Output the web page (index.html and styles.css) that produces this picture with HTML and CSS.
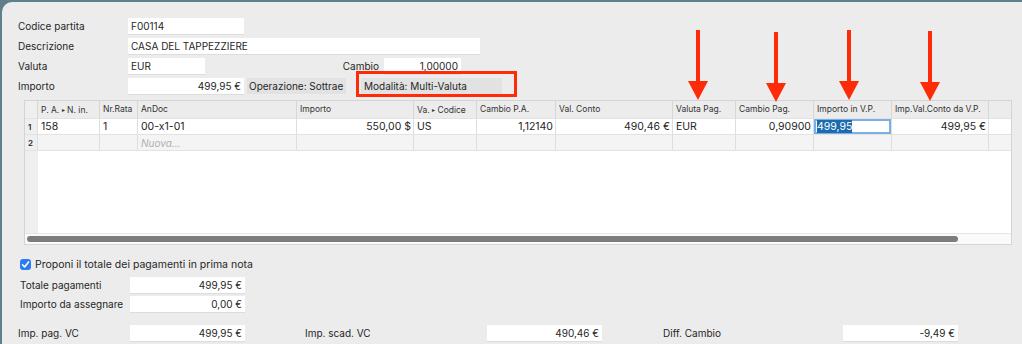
FILE: index.html
```html
<!DOCTYPE html>
<html lang="it">
<head>
  <meta charset="UTF-8" />
  <title>Pagamento partita</title>
  <link rel="stylesheet" href="styles.css">
</head>
<body>
  <div class="window">

    <!-- Dati partita -->
    <div class="head">
      <div class="row">
        <span class="label">Codice partita</span>
        <span class="field w116">F00114</span>
      </div>
      <div class="row">
        <span class="label">Descrizione</span>
        <span class="field w352">CASA DEL TAPPEZZIERE</span>
      </div>
      <div class="row">
        <span class="label">Valuta</span>
        <span class="field w77">EUR</span>
        <span class="label-right">Cambio</span>
        <span class="field w77 num">1,00000</span>
      </div>
      <div class="row">
        <span class="label">Importo</span>
        <span class="field w116 num">499,95 €</span>
        <span class="tag op">Operazione: Sottrae</span>
        <span class="tag mode">Modalità: Multi-Valuta</span>
      </div>
    </div>

    <!-- Griglia pagamenti -->
    <div class="grid">
      <div class="grow ghead">
        <div class="g"></div>
        <div>P. A. <span class="tri">▸</span> N. in.</div>
        <div>Nr.Rata</div>
        <div>AnDoc</div>
        <div>Importo</div>
        <div>Va. <span class="tri">▸</span> Codice</div>
        <div>Cambio P.A.</div>
        <div>Val. Conto</div>
        <div>Valuta Pag.</div>
        <div>Cambio Pag.</div>
        <div>Importo in V.P.</div>
        <div>Imp.Val.Conto da V.P.</div>
        <div></div>
      </div>
      <div class="grow r1">
        <div class="g">1</div>
        <div>158</div>
        <div>1</div>
        <div>00-x1-01</div>
        <div class="num">550,00 $</div>
        <div>US</div>
        <div class="num">1,12140</div>
        <div class="num">490,46 €</div>
        <div>EUR</div>
        <div class="num">0,90900</div>
        <div class="edit"><span class="sel">499,95</span></div>
        <div class="num">499,95 €</div>
        <div></div>
      </div>
      <div class="grow r2">
        <div class="g">2</div>
        <div></div>
        <div></div>
        <div class="new">Nuova...</div>
        <div></div><div></div><div></div><div></div><div></div><div></div><div></div><div></div><div></div>
      </div>
      <div class="filler"><div class="g"></div></div>
      <div class="hscroll"><div class="thumb"></div></div>
    </div>

    <!-- Totali -->
    <div class="foot">
      <label class="check"><span class="box">
        <svg width="9" height="9" viewBox="0 0 9 9"><path d="M1.5 4.8 L3.6 6.9 L7.6 1.9" fill="none" stroke="#fff" stroke-width="1.6" stroke-linecap="round" stroke-linejoin="round"/></svg>
      </span>Proponi il totale dei pagamenti in prima nota</label>
      <div class="row">
        <span class="label">Totale pagamenti</span>
        <span class="field w115 num">499,95 €</span>
      </div>
      <div class="row">
        <span class="label">Importo da assegnare</span>
        <span class="field w115 num">0,00 €</span>
      </div>
      <div class="row last">
        <span class="label l1">Imp. pag. VC</span>
        <span class="field w115 num">499,95 €</span>
        <span class="label l2">Imp. scad. VC</span>
        <span class="field w115 num">490,46 €</span>
        <span class="label l3">Diff. Cambio</span>
        <span class="field w115 num">-9,49 €</span>
      </div>
    </div>

    <!-- Annotazioni -->
    <div class="redbox"></div>
    <div class="arrow" style="left: 686px; top: 28px;"></div>
    <div class="arrow" style="left: 764px; top: 30px;"></div>
    <div class="arrow" style="left: 837px; top: 28px;"></div>
    <div class="arrow" style="left: 918px; top: 29px;"></div>
  </div>
</body>
</html>
```

FILE: styles.css
```css
* {
  box-sizing: border-box;
}

body {
  margin: 0;
  background-color: #5f7f8a;
  font-family: 'Inter', 'Liberation Sans', sans-serif;
  font-size: 10px;
  color: #262626;
  overflow: hidden;
}

.window {
  position: relative;
  margin: 2px 0 0 2px;
  height: 342px;
  background-color: #ececec;
  border-top-left-radius: 10px;
}

.row {
  display: flex;
  align-items: center;
  height: 16px;
  margin-bottom: 4px;
}

.head {
  padding: 16px 0 0 16px;
}

.label {
  width: 110px;
  flex-shrink: 0;
}

.label-right {
  width: 179px;
  text-align: right;
  padding-right: 5px;
}

.field {
  height: 16px;
  line-height: 16px;
  background: #fff;
  padding: 0 3px;
  white-space: nowrap;
  box-shadow: 0 1px 0 #dcdcdc;
}

.field.num {
  text-align: right;
}

.w77 { width: 77px; }
.w115 { width: 115px; }
.w116 { width: 116px; }
.w352 { width: 352px; }

.tag {
  background: #e2e2e2;
  height: 16px;
  line-height: 16px;
  padding: 0 3px;
  white-space: nowrap;
}

.tag.op {
  margin-left: 3px;
  width: 99px;
  padding: 0 2px;
}

.tag.mode {
  margin-left: 15px;
  width: 141px;
  padding-left: 3px;
}

/* griglia */
.grid {
  margin: 6px 0 0 22px;
  width: 988px;
  height: 145px;
  border: 1px solid #d4d4d4;
  background: #fff;
  display: flex;
  flex-direction: column;
}

.grow {
  display: grid;
  grid-template-columns: 13px 62px 38px 159px 117px 63px 79px 117px 63px 78px 78px 97px 1fr;
  height: 16px;
  line-height: 16px;
  border-bottom: 1px solid #e2e2e2;
}

.grow > div {
  border-right: 1px solid #dedede;
  padding: 0 3px;
  white-space: nowrap;
  overflow: hidden;
}

.grow > div:last-child {
  border-right: none;
}

.grow .num {
  text-align: right;
  padding-right: 2px;
}

.ghead {
  height: 18px;
  line-height: 17px;
  background: #ececec;
  font-size: 8.5px;
  color: #333;
}

.ghead > div {
  border-right-color: #d6d6d6;
}

.tri {
  font-size: 6px;
  vertical-align: 1px;
}

.g {
  background: #efefef;
  font-size: 8px;
  font-weight: 600;
  padding: 0 0 0 3px !important;
}

.r1 {
  background: #fff;
  font-size: 10.5px;
}

.r2 {
  background: #f4f4f4;
}

.new {
  color: #b0b0b0;
  font-style: italic;
}

.edit {
  box-shadow: inset 0 0 0 2px #7ab0e6;
  background: #fff;
  padding: 0 3px !important;
}

.sel {
  background: #1c6bb0;
  color: #fff;
}

.filler {
  flex: 1;
  display: flex;
}

.filler .g {
  width: 13px;
}

.hscroll {
  height: 11px;
  background: #fafafa;
  border-top: 1px solid #e6e6e6;
  padding: 2px 0 0 2px;
}

.thumb {
  width: 931px;
  height: 6px;
  border-radius: 3px;
  background: #7d7d7d;
}

/* totali */
.foot {
  padding: 12px 0 0 16px;
}

.check {
  display: flex;
  align-items: center;
  height: 14px;
  margin: 0 0 6px 2px;
  font-size: 10.5px;
}

.box {
  width: 11px;
  height: 11px;
  border-radius: 3px;
  background: #2b7bf3;
  display: flex;
  align-items: center;
  justify-content: center;
  margin-right: 4px;
}

.foot .row {
  height: 16px;
  margin-bottom: 3px;
}

.foot .row .label {
  width: 112px;
  padding-left: 2px;
}

.foot .row.last {
  margin-top: 13px;
}

.foot .row.last .l1 {
  padding-left: 0;
}

.foot .row.last .l2 {
  margin-left: 60px;
  width: 182px;
  padding-left: 0;
}

.foot .row.last .l3 {
  margin-left: 61px;
  width: 180px;
  padding-left: 0;
}

/* annotazioni */
.redbox {
  position: absolute;
  left: 354px;
  top: 69px;
  width: 161px;
  height: 26px;
  border: 3px solid #fd2b08;
}

.arrow {
  position: absolute;
  width: 20px;
  height: 70px;
}

.arrow::before {
  content: "";
  position: absolute;
  left: 8px;
  top: 0;
  width: 4px;
  height: 54px;
  background: #fd2b08;
}

.arrow::after {
  content: "";
  position: absolute;
  left: 0;
  top: 51px;
  border-left: 10px solid transparent;
  border-right: 10px solid transparent;
  border-top: 19px solid #fd2b08;
}
```
